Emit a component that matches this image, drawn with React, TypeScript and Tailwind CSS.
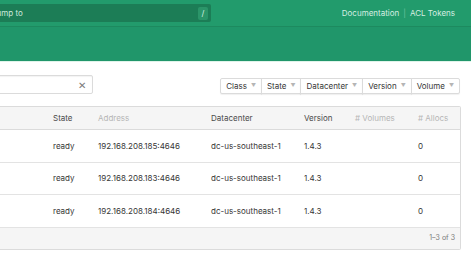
import React from 'react';

interface Node {
  state: string;
  address: string;
  datacenter: string;
  version: string;
  volumes: string;
  allocs: number;
}

const nodes: Node[] = [
  { state: 'ready', address: '192.168.208.185:4646', datacenter: 'dc-us-southeast-1', version: '1.4.3', volumes: '', allocs: 0 },
  { state: 'ready', address: '192.168.208.183:4646', datacenter: 'dc-us-southeast-1', version: '1.4.3', volumes: '', allocs: 0 },
  { state: 'ready', address: '192.168.208.184:4646', datacenter: 'dc-us-southeast-1', version: '1.4.3', volumes: '', allocs: 0 },
];

const filters = ['Class', 'State', 'Datacenter', 'Version', 'Volume'];

const cols = 'grid grid-cols-[53px_45px_113px_93px_51px_63px_1fr]';

const App = () => {
  return (
    <div className="w-[471px] h-[265px] overflow-hidden bg-white text-[#363636]" style={{ fontFamily: 'Inter, "Liberation Sans", sans-serif' }}>
      {/* Top bar */}
      <div className="h-[27px] bg-[#229b6c] flex items-center justify-between border-b border-[#1d8a5f]">
        <div className="ml-[-15px] w-[226px] h-[18px] bg-[#1c7d56] rounded-[2px] flex items-center justify-between pl-[7px] pr-[3px]">
          <span className="text-[8px] text-[#cfe9dd]">Jump to</span>
          <span className="w-[10px] h-[13px] bg-[#2b9569] rounded-[2px] text-[8px] text-[#d8f0e4] flex items-center justify-center">/</span>
        </div>
        <div className="flex items-center text-[8px] text-[#d5eee2] pr-[16px]">
          <span>Documentation</span>
          <span className="mx-[4px] text-[#6fc39d]">|</span>
          <span>ACL Tokens</span>
        </div>
      </div>

      {/* Sub nav */}
      <div className="h-[35px] bg-[#20966a] border-b border-[#dff4ea]" />

      {/* Toolbar */}
      <div className="flex items-end justify-between mt-[13px] pr-[11px]">
        <div className="ml-[-10px] w-[103px] h-[19px] border border-[#dbdbdb] rounded-[2px] bg-white flex items-center justify-end pr-[6px] shadow-[inset_0_1px_1px_rgba(0,0,0,0.05)]">
          <span className="text-[10px] text-[#7a7a7a] leading-none">✕</span>
        </div>
        <div className="flex">
          {filters.map((f, idx) => (
            <div
              key={f}
              className={`h-[16px] bg-white border border-[#dbdbdb] flex items-center px-[5px] gap-[4px] text-[8px] text-[#363636] shadow-[0_1px_1px_rgba(0,0,0,0.06)] ${idx > 0 ? '-ml-px' : 'rounded-l-[2px]'} ${idx === filters.length - 1 ? 'rounded-r-[2px]' : ''}`}
            >
              <span>{f}</span>
              <span className="text-[5px] text-[#b5b5b5]">▼</span>
            </div>
          ))}
        </div>
      </div>

      {/* Table */}
      <div className="mt-[12px] mr-[10px] border border-l-0 border-[#dbdbdb] rounded-r-[2px]">
        <div className={`${cols} h-[23px] items-center bg-[#f5f5f5] border-b border-[#dbdbdb] text-[8px]`}>
          <span />
          <span className="text-[#4a4a4a]">State</span>
          <span className="text-[#b5b5b5]">Address</span>
          <span className="text-[#4a4a4a]">Datacenter</span>
          <span className="text-[#4a4a4a]">Version</span>
          <span className="text-[#b5b5b5]"># Volumes</span>
          <span className="text-[#b5b5b5]"># Allocs</span>
        </div>
        {nodes.map((n, idx) => (
          <div key={idx} className={`${cols} h-[32.5px] items-center border-b border-[#e3e3e3] text-[8px] text-[#363636]`}>
            <span />
            <span>{n.state}</span>
            <span>{n.address}</span>
            <span>{n.datacenter}</span>
            <span>{n.version}</span>
            <span>{n.volumes}</span>
            <span>{n.allocs}</span>
          </div>
        ))}
        <div className="h-[21px] bg-[#f5f5f5] flex items-center justify-end pr-[5px] text-[7px] text-[#7a7a7a]">
          1–3 of 3
        </div>
      </div>
    </div>
  );
};

export default App;
